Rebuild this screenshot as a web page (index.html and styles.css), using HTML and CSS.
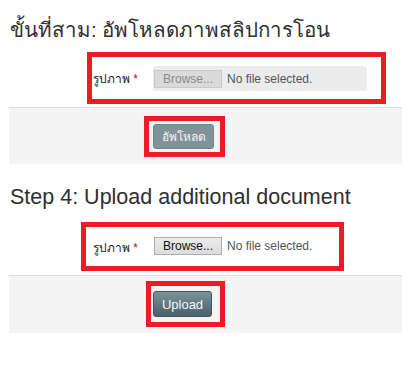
FILE: index.html
```html
<!DOCTYPE html>
<html lang="th">
<head>
  <meta charset="UTF-8" />
  <meta name="viewport" content="width=device-width, initial-scale=1.0" />
  <title>Upload</title>
  <link rel="stylesheet" href="styles.css">
</head>
<body>
  <div class="page">
    <h2 class="step thai">ขั้นที่สาม: อัพโหลดภาพสลิปการโอน</h2>
    <div class="field first">
      <label class="field-label">รูปภาพ <span class="req">*</span></label>
      <div class="file-box disabled">
        <span class="browse">Browse...</span>
        <span class="file-name">No file selected.</span>
      </div>
    </div>
    <div class="actions first">
      <button class="btn btn-muted" type="button">อัพโหลด</button>
    </div>

    <h2 class="step second">Step 4: Upload additional document</h2>
    <div class="field second">
      <label class="field-label">รูปภาพ <span class="req">*</span></label>
      <div class="file-box">
        <span class="browse">Browse...</span>
        <span class="file-name">No file selected.</span>
      </div>
    </div>
    <div class="actions second">
      <button class="btn btn-dark" type="button">Upload</button>
    </div>

    <!-- red markers drawn over the screenshot -->
    <div class="mark mark-1"></div>
    <div class="mark mark-2"></div>
    <div class="mark mark-3"></div>
    <div class="mark mark-4"></div>
  </div>
</body>
</html>
```

FILE: styles.css
```css
body {
  margin: 0;
  background: #fff;
  font-family: "Liberation Sans", Arial, sans-serif;
  color: #333;
}
.page {
  position: relative;
  width: 393px;
  padding: 18px 11px 0 9px;
  height: 364px;
}
.step {
  margin: 0 0 0 1px;
  font-size: 21.5px;
  font-weight: normal;
  line-height: 24px;
  color: #2f2f2f;
  white-space: nowrap;
}
.step.thai {
  font-size: 20.5px;
}
.step.second {
  margin-top: 21px;
}
.field {
  display: flex;
  align-items: center;
  padding-left: 84px;
}
.field.first {
  margin: 24px 0 16px;
  height: 25px;
}
.field.second {
  margin: 28px 0 20px;
  height: 18px;
}
.field-label {
  width: 60px;
  font-size: 12px;
  color: #222;
  align-self: flex-start;
  margin-top: 1px;
}
.field.first .field-label {
  margin-top: 3px;
}
.req {
  color: #d0021b;
}
.file-box {
  display: flex;
  align-items: center;
  height: 18px;
  font-size: 12px;
}
.file-box.disabled {
  width: 214px;
  height: 25px;
  background: #ececec;
  border-radius: 3px;
}
.browse {
  box-sizing: border-box;
  width: 68px;
  height: 18px;
  margin-left: 1px;
  line-height: 16px;
  text-align: center;
  color: #111;
  background: linear-gradient(#ececec, #dcdcdc);
  border: 1px solid #adadad;
}
.disabled .browse {
  color: #8a8a8a;
  background: #dadada;
  border-color: #c9c9c9;
}
.file-name {
  margin-left: 5px;
  color: #555;
}
.actions {
  background: #f4f4f4;
  border-top: 1px solid #dddddd;
  padding-left: 144px;
}
.actions.first {
  padding-top: 16px;
  padding-bottom: 15px;
}
.actions.second {
  padding-top: 15px;
  padding-bottom: 16px;
}
.btn {
  display: block;
  box-sizing: border-box;
  padding: 0;
  border-radius: 3px;
  font-family: "Liberation Sans", Tahoma, sans-serif;
  cursor: pointer;
}
.btn-muted {
  width: 61px;
  height: 25px;
  font-size: 12px;
  color: #f2f4f5;
  background: #7f9399;
  border: 1px solid #72868c;
}
.btn-dark {
  width: 59px;
  height: 26px;
  font-size: 13px;
  color: #f4f6f7;
  background: linear-gradient(#7d939b, #4a6068);
  border: 1px solid #3f545b;
}
.mark {
  position: absolute;
  box-sizing: border-box;
  border: 5px solid #ed1c24;
}
.mark-1 { left: 87px; top: 52px; width: 299px; height: 52px; }
.mark-2 { left: 144px; top: 116px; width: 81px; height: 41px; }
.mark-3 { left: 81px; top: 222px; width: 263px; height: 49px; }
.mark-4 { left: 146px; top: 281px; width: 79px; height: 46px; }
```
